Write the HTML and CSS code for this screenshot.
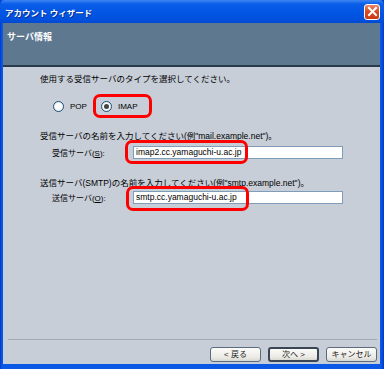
FILE: index.html
```html
<!DOCTYPE html>
<html lang="ja">
<head>
    <meta charset="UTF-8">
    <title>アカウント ウィザード</title>
    <link rel="stylesheet" href="styles.css">
</head>
<body>
    <div class="window">
        <div class="titlebar">
            <span class="title">アカウント ウィザード</span>
            <span class="close">
                <svg width="11" height="11" viewBox="0 0 11 11"><path d="M2 2 L9 9 M9 2 L2 9" stroke="#fff" stroke-width="2" stroke-linecap="square"/></svg>
            </span>
        </div>
        <div class="panel">
            <div class="header">サーバ情報</div>
            <div class="content">
                <p class="question">使用する受信サーバのタイプを選択してください。</p>
                <div class="radios">
                    <label class="radio"><span class="dot"></span>POP</label>
                    <label class="radio marked"><span class="dot checked"></span>IMAP</label>
                </div>
                <p class="question q2">受信サーバの名前を入力してください(例"mail.example.net")。</p>
                <div class="field">
                    <span class="label">受信サーバ(<u>S</u>):</span>
                    <span class="input">imap2.cc.yamaguchi-u.ac.jp</span>
                    <span class="mark"></span>
                </div>
                <p class="question q3">送信サーバ(SMTP)の名前を入力してください(例"smtp.example.net")。</p>
                <div class="field f2">
                    <span class="label">送信サーバ(<u>O</u>):</span>
                    <span class="input">smtp.cc.yamaguchi-u.ac.jp</span>
                    <span class="mark"></span>
                </div>
            </div>
            <div class="footer">
                <button class="btn">&lt; 戻る</button>
                <button class="btn default">次へ &gt;</button>
                <button class="btn">キャンセル</button>
            </div>
        </div>
    </div>
</body>
</html>
```

FILE: styles.css
```css
body {
    margin: 0;
    padding: 0;
    font-family: "Liberation Sans", "Noto Sans CJK JP", sans-serif;
    font-size: 8px;
    color: #000;
}
.window {
    width: 384px;
    height: 369px;
    box-sizing: border-box;
    display: flex;
    flex-direction: column;
    background: linear-gradient(to right, #0038c8 0, #0a58e6 2px, #0a58e6 381px, #0038c8 384px);
    padding: 0 4px 5px 3px;
}
.titlebar {
    height: 23px;
    margin: 0 -4px 0 -3px;
    display: flex;
    align-items: center;
    justify-content: space-between;
    padding: 0 4px 0 5px;
    background: linear-gradient(#3d86f4 0, #0a5de8 4px, #0256e4 12px, #0150dc 20px, #0048d0 23px);
    border-radius: 5px 5px 0 0;
}
.title {
    color: #fff;
    font-size: 8.5px;
    font-weight: bold;
    text-shadow: 1px 1px 0 #0a2f8a;
}
.close {
    width: 16px;
    height: 16px;
    box-sizing: border-box;
    border: 1px solid #fff;
    border-radius: 3px;
    background: linear-gradient(#e98a6a, #d9461e 50%, #c83a14);
    display: flex;
    align-items: center;
    justify-content: center;
}
.panel {
    flex: 1;
    display: flex;
    flex-direction: column;
    background: #c7ced8;
}
.header {
    height: 44px;
    box-sizing: border-box;
    background: #5e7890;
    border-bottom: 2px solid #2b3a48;
    color: #fff;
    font-size: 9px;
    font-weight: bold;
    padding: 6px 0 0 4px;
    line-height: 16px;
}
.content {
    flex: 1;
    padding: 5px 0 0 37px;
}
.question {
    margin: 0;
    line-height: 14px;
    font-size: 8.5px;
}
.radios {
    display: flex;
    align-items: center;
    height: 24px;
    margin: 8px 0 0 13px;
}
.radio {
    display: flex;
    align-items: center;
    gap: 6px;
    font-size: 8px;
    height: 18px;
}
.radio.marked {
    margin-left: 6px;
    height: 18px;
    padding: 0 12px 0 5px;
    border: 3px solid #f00;
    border-radius: 7px;
}
.dot {
    width: 9px;
    height: 9px;
    border-radius: 50%;
    border: 1px solid #1c5180;
    background: radial-gradient(#fff 40%, #dcdcd4);
    position: relative;
}
.dot.checked::after {
    content: "";
    position: absolute;
    left: 2px;
    top: 2px;
    width: 5px;
    height: 5px;
    border-radius: 50%;
    background: #444;
}
.q2 {
    margin-top: 11px;
}
.field {
    position: relative;
    display: flex;
    align-items: center;
    margin: 3px 0 0 12px;
    height: 13px;
}
.label {
    width: 81px;
    font-size: 8px;
}
.input {
    width: 210px;
    height: 13px;
    box-sizing: border-box;
    background: #fff;
    border: 1px solid #7f9db9;
    font-size: 8.5px;
    line-height: 11px;
    padding-left: 2px;
}
.mark {
    position: absolute;
    left: 73px;
    top: -6px;
    width: 123px;
    height: 24px;
    box-sizing: border-box;
    border: 3px solid #f00;
    border-radius: 7px;
}
.q3 {
    margin-top: 17px;
}
.f2 {
    margin-top: 1px;
}
.f2 .mark {
    left: 74px;
    top: -5px;
    height: 25px;
}
.footer {
    height: 25px;
    box-sizing: border-box;
    margin: 0 3px 0 5px;
    border-top: 1px solid #a2aab4;
    display: flex;
    justify-content: flex-end;
    align-items: flex-start;
    gap: 7px;
    padding: 7px 0 0;
}
.btn {
    width: 51px;
    height: 15px;
    padding: 0;
    font-family: inherit;
    font-size: 8px;
    line-height: 11px;
    color: #222;
    background: linear-gradient(#fbfbf8, #ecebe6 70%, #d8d8d0);
    border: 1px solid #5c6b80;
    border-radius: 3px;
    white-space: nowrap;
}
.btn.default {
    border: 2px solid #3a4656;
}
```
